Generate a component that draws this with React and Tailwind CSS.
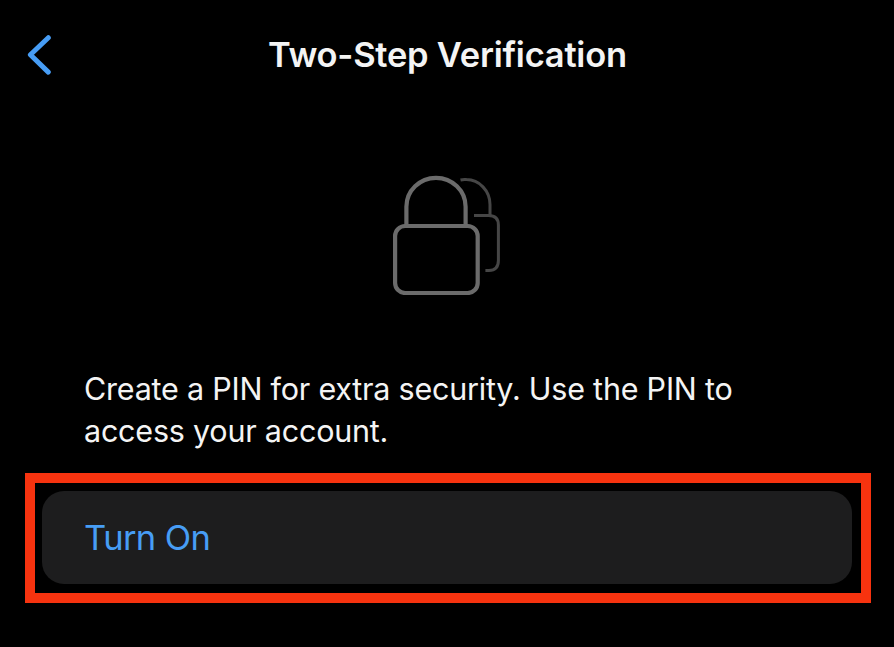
function BackIcon() {
  return (
    <svg className="block h-[42px] w-[26px]" viewBox="0 0 26 42" fill="none" stroke="#479df5" strokeWidth="5" strokeLinecap="round" strokeLinejoin="round">
      <path d="M21.3 3.7 3.400 20.800l17.900 17.300" />
    </svg>
  );
}

function LocksIcon() {
  return (
    <svg className="block h-[120px] w-[108px]" viewBox="392 175 108 120" fill="none" stroke="#6b6b6b" strokeWidth="4.2">
      <path d="M406.4 225v-18.2a29.6 28.9 0 0 1 59.2 0V225" />
      <rect x="395.1" y="226" width="82.6" height="67" rx="10" />
      <g stroke="#464646" strokeWidth="3">
        <path d="M460.5 180c2-.5 4-.6 6-.4 12.500 0 23.500 11 23.500 25v10.500" />
        <path d="M474 215.600h14.500c6.500 0 9.900 3.500 9.900 9.500v35.500c0 6.500-3.500 9.900-9.500 9.900h-3.500" />
      </g>
    </svg>
  );
}

export default function App() {
  return (
    <main className="flex h-[647px] w-[894px] flex-col overflow-hidden bg-black font-[Inter,'Liberation_Sans',sans-serif] text-[#f4f4f4]">
      <header className="grid h-[110px] shrink-0 grid-cols-[268px_1fr_268px] items-center">
        <button className="ml-[27px] w-[26px]" aria-label="Back">
          <BackIcon />
        </button>
        <h1 className="whitespace-nowrap text-[34.5px] leading-[42px] font-semibold tracking-[-0.24px]">Two-Step Verification</h1>
      </header>
      <div className="mt-[65px] ml-[392px] shrink-0">
        <LocksIcon />
      </div>
      <p className="mt-[73px] ml-[84px] shrink-0 whitespace-nowrap text-[30.5px] leading-[42px] tracking-[-0.22px]">
        Create a PIN for extra security. Use the PIN to
        <br />
        access your account.
      </p>
      <section className="mt-[21px] ml-[25px] h-[130px] w-[846px] shrink-0 border-10 border-[#f7330f] pt-2 pr-[9px] pl-[7px]">
        <button className="flex h-[93px] w-full items-center rounded-[22px] bg-[#1d1d1e] pl-[42px] text-[34.5px] leading-[42px] tracking-[-0.6px] text-[#479df5]">
          Turn On
        </button>
      </section>
    </main>
  );
}
